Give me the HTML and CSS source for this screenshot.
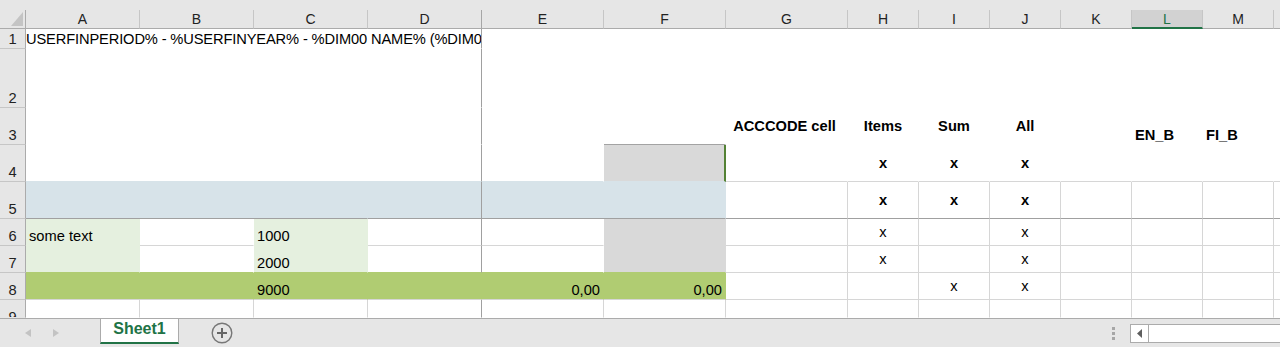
FILE: index.html
```html
<!DOCTYPE html>
<html lang="en">
<head>
<meta charset="utf-8">
<title>Sheet1</title>
<link rel="stylesheet" href="styles.css">
</head>
<body>
<div class="top"></div>
<div class="sheet">
  <!-- column headers -->
  <div class="c corner"><svg width="12" height="14" viewBox="0 0 12 14"><path d="M12 0 L12 14 L0 14 Z" fill="#c4c4c4"/></svg></div>
  <div class="c ch">A</div>
  <div class="c ch">B</div>
  <div class="c ch">C</div>
  <div class="c ch chf">D</div>
  <div class="c ch">E</div>
  <div class="c ch">F</div>
  <div class="c ch">G</div>
  <div class="c ch">H</div>
  <div class="c ch">I</div>
  <div class="c ch">J</div>
  <div class="c ch">K</div>
  <div class="c ch sel">L</div>
  <div class="c ch">M</div>
  <div class="c ch"></div>

  <!-- row 1 -->
  <div class="c rh">1</div>
  <div class="c span4 fr title">USERFINPERIOD% - %USERFINYEAR% - %DIM00 NAME% (%DIM00 CODE%)</div>
  <div class="c span10"></div>

  <!-- row 2 -->
  <div class="c rh">2</div>
  <div class="c span4 fr"></div>
  <div class="c span10"></div>

  <!-- row 3 -->
  <div class="c rh">3</div>
  <div class="c span4 fr"></div>
  <div class="c"></div>
  <div class="c tb"></div>
  <div class="c b ctr mid acc">ACCCODE cell</div>
  <div class="c b ctr mid">Items</div>
  <div class="c b ctr mid">Sum</div>
  <div class="c b ctr mid">All</div>
  <div class="c"></div>
  <div class="c b">EN_B</div>
  <div class="c b">FI_B</div>
  <div class="c"></div>

  <!-- row 4 -->
  <div class="c rh">4</div>
  <div class="c span4 fr ubl"></div>
  <div class="c ubl"></div>
  <div class="c gray ubl gsel"></div>
  <div class="c gb"></div>
  <div class="c b ctr mid gb">x</div>
  <div class="c b ctr mid gb">x</div>
  <div class="c b ctr mid gb">x</div>
  <div class="c gb"></div>
  <div class="c gb"></div>
  <div class="c gb"></div>
  <div class="c gb"></div>

  <!-- row 5 -->
  <div class="c rh">5</div>
  <div class="c span3 blue fb"></div>
  <div class="c blue fr fb"></div>
  <div class="c span2 blue fb"></div>
  <div class="c gr fb"></div>
  <div class="c b ctr mid gr fb">x</div>
  <div class="c b ctr mid gr fb">x</div>
  <div class="c b ctr mid gr fb">x</div>
  <div class="c gr fb"></div>
  <div class="c gr fb"></div>
  <div class="c gr fb"></div>
  <div class="c fb"></div>

  <!-- row 6 -->
  <div class="c rh">6</div>
  <div class="c lg">some text</div>
  <div class="c gb"></div>
  <div class="c lg">1000</div>
  <div class="c gb fr"></div>
  <div class="c gb"></div>
  <div class="c gray"></div>
  <div class="c gr gb"></div>
  <div class="c ctr mid gr gb">x</div>
  <div class="c gr gb"></div>
  <div class="c ctr mid gr gb">x</div>
  <div class="c gr gb"></div>
  <div class="c gr gb"></div>
  <div class="c gr gb"></div>
  <div class="c gb"></div>

  <!-- row 7 -->
  <div class="c rh">7</div>
  <div class="c lg ug"></div>
  <div class="c ug"></div>
  <div class="c lg ug">2000</div>
  <div class="c ug fr"></div>
  <div class="c ug"></div>
  <div class="c gray ug"></div>
  <div class="c gr gb"></div>
  <div class="c ctr mid gr gb">x</div>
  <div class="c gr gb"></div>
  <div class="c ctr mid gr gb">x</div>
  <div class="c gr gb"></div>
  <div class="c gr gb"></div>
  <div class="c gr gb"></div>
  <div class="c gb"></div>

  <!-- row 8 -->
  <div class="c rh">8</div>
  <div class="c span2 dg gb"></div>
  <div class="c dg gb">9000</div>
  <div class="c dg gb"></div>
  <div class="c dg gb rt">0,00</div>
  <div class="c dg gb rt">0,00</div>
  <div class="c gr gb"></div>
  <div class="c gr gb"></div>
  <div class="c ctr mid gr gb">x</div>
  <div class="c ctr mid gr gb">x</div>
  <div class="c gr gb"></div>
  <div class="c gr gb"></div>
  <div class="c gr gb"></div>
  <div class="c gb"></div>

  <!-- row 9 -->
  <div class="c rh r9">9</div>
  <div class="c gr"></div>
  <div class="c gr"></div>
  <div class="c gr"></div>
  <div class="c fr"></div>
  <div class="c gr"></div>
  <div class="c gr"></div>
  <div class="c gr"></div>
  <div class="c gr"></div>
  <div class="c gr"></div>
  <div class="c gr"></div>
  <div class="c gr"></div>
  <div class="c gr"></div>
  <div class="c gr"></div>
  <div class="c"></div>
</div>

<div class="tabbar">
  <div class="nav">
    <svg width="6" height="8" viewBox="0 0 6 8"><path d="M6 0 L0 4 L6 8 Z" fill="#c3c3c3"/></svg>
    <svg width="6" height="8" viewBox="0 0 6 8"><path d="M0 0 L6 4 L0 8 Z" fill="#c3c3c3"/></svg>
  </div>
  <div class="tab">Sheet1</div>
  <div class="add">
    <svg width="22" height="22" viewBox="0 0 22 22"><circle cx="11" cy="11" r="9.8" fill="none" stroke="#777" stroke-width="1.4"/><path d="M6 11 H16 M11 6 V16" stroke="#666" stroke-width="2"/></svg>
  </div>
  <div class="spacer"></div>
  <div class="grip"><span></span><span></span><span></span></div>
  <div class="hscroll">
    <div class="sbtn"><svg width="5" height="9" viewBox="0 0 5 9"><path d="M5 0 L0 4.5 L5 9 Z" fill="#5f5f5f"/></svg></div>
    <div class="track"></div>
  </div>
</div>
</body>
</html>
```

FILE: styles.css
```css
* { box-sizing: border-box; }

html, body {
  margin: 0;
  padding: 0;
  width: 1280px;
  height: 347px;
  overflow: hidden;
  background: #ffffff;
  font-family: "Liberation Sans", Arial, sans-serif;
}

.top {
  height: 10px;
  background: #e6e6e6;
}

.sheet {
  display: grid;
  grid-template-columns: 26px 114px 114px 114px 114px 122px 122px 122px 71px 71px 71px 71px 71px 71px 1fr;
  grid-template-rows: 19px 20px 59px 37px 37px 37px 27px 27px 27px 18px;
  height: 308px;
  overflow: hidden;
}

.c {
  display: flex;
  align-items: flex-end;
  min-width: 0;
  padding: 0 3px;
  border-right: 1px solid transparent;
  border-bottom: 1px solid transparent;
  font-size: 14.67px;
  line-height: 17px;
  color: #000;
  white-space: nowrap;
  overflow: hidden;
}

/* headers */
.corner {
  background: #e6e6e6;
  border-right-color: #ababab;
  border-bottom-color: #ababab;
  justify-content: flex-end;
  padding: 0 2px 2px 0;
}
.ch {
  background: #e6e6e6;
  border-right-color: #c6c6c6;
  border-bottom-color: #ababab;
  justify-content: center;
  align-items: center;
  padding: 0;
  font-size: 14px;
  line-height: 18px;
  color: #222;
}
.ch.chf { border-right-color: #a6a6a6; }
.ch.sel {
  background: #d2d2d2;
  color: #217346;
  border-bottom: 2px solid #217346;
}
.rh {
  background: #e6e6e6;
  border-right-color: #ababab;
  border-bottom-color: #c6c6c6;
  justify-content: center;
  padding: 0;
  color: #222;
}
.rh.r9 {
  align-items: flex-start;
  padding-top: 9px;
  border-bottom-color: transparent;
}

/* spans */
.span2 { grid-column: span 2; }
.span3 { grid-column: span 3; }
.span4 { grid-column: span 4; }
.span10 { grid-column: span 10; }

.title {
  padding: 0;
  letter-spacing: -0.13px;
}
.acc { padding-right: 7px; }

/* fills */
.blue { background: #d7e3e9; }
.lg { background: #e5f0df; }
.dg { background: #b0cc72; }
.gray { background: #d9d9d9; }

/* borders */
.gr { border-right-color: #d6d6d6; }
.gb { border-bottom-color: #d6d6d6; }
.fr { border-right-color: #a0a0a0; }
.fb { border-bottom-color: #a0a0a0; }
.tb { border-bottom-color: #a3a3a3; }
.ubl { border-bottom-color: #d7e3e9; }
.ug { border-bottom-color: #b0cc72; }
.gsel { border-right: 2px solid #548235; }

/* alignment and weight */
.b { font-weight: bold; }
.ctr { justify-content: center; }
.mid { align-items: center; }
.rt { justify-content: flex-end; }

/* sheet tab bar */
.tabbar {
  display: flex;
  align-items: center;
  height: 29px;
  background: #e6e6e6;
  border-top: 1px solid #ababab;
  overflow: hidden;
}
.nav {
  width: 100px;
  flex-shrink: 0;
  display: flex;
  align-items: center;
  gap: 22px;
  padding-left: 25px;
}
.nav svg { display: block; }
.tab {
  width: 79px;
  height: 25px;
  flex-shrink: 0;
  align-self: flex-start;
  display: flex;
  justify-content: center;
  align-items: flex-start;
  background: #ffffff;
  border-left: 1px solid #ababab;
  border-right: 1px solid #ababab;
  border-bottom: 2px solid #217346;
  color: #217346;
  font-weight: bold;
  font-size: 16px;
  line-height: 19px;
}
.add {
  margin-left: 32px;
  width: 22px;
  height: 22px;
  flex-shrink: 0;
}
.add svg { display: block; }
.spacer { flex: 1; }
.grip {
  width: 3px;
  flex-shrink: 0;
  display: flex;
  flex-direction: column;
  gap: 2px;
}
.grip span {
  display: block;
  width: 3px;
  height: 3px;
  background: #a6a6a6;
}
.hscroll {
  margin-left: 15px;
  width: 150px;
  height: 19px;
  flex-shrink: 0;
  display: flex;
  background: #ffffff;
  border: 1px solid #ababab;
  border-right: none;
}
.sbtn {
  width: 18px;
  flex-shrink: 0;
  display: flex;
  align-items: center;
  justify-content: center;
  border-right: 1px solid #ababab;
}
.sbtn svg { display: block; }
.track { flex: 1; }
```
